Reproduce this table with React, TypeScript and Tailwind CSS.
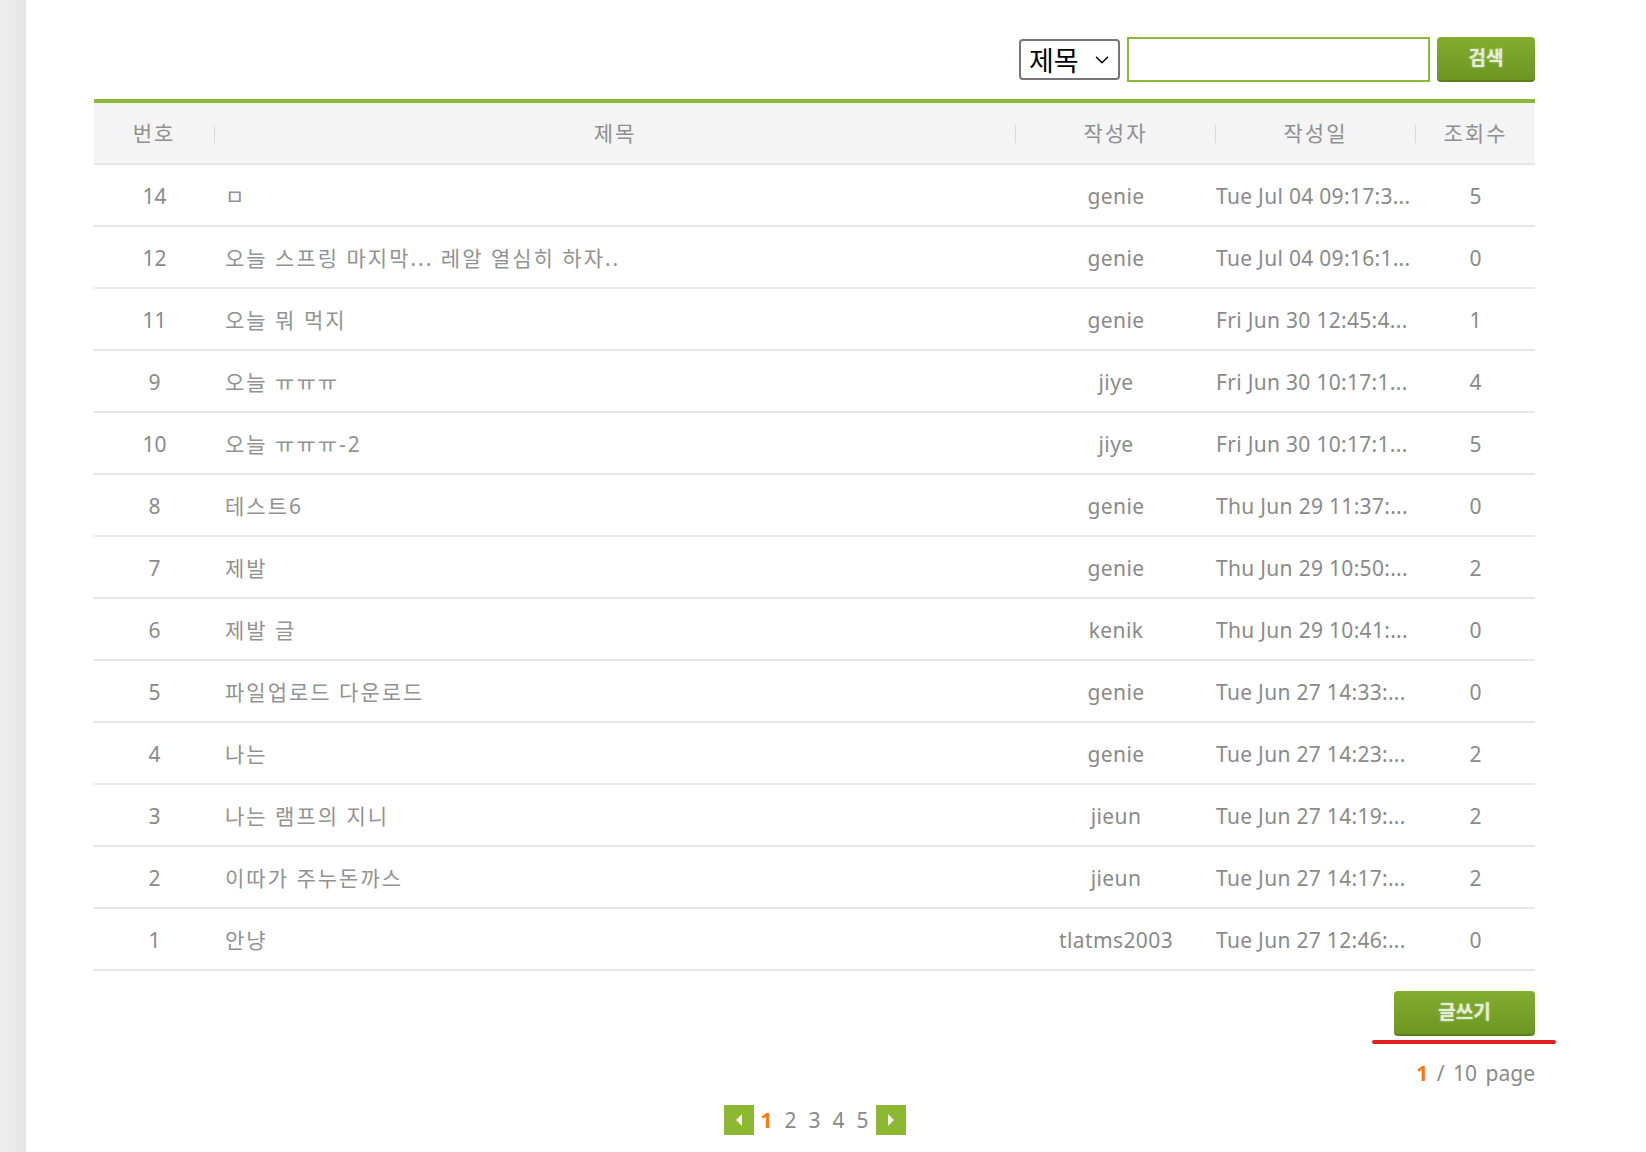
import { ChevronDown } from "lucide-react";

const posts = [
  { no: 14, title: "ㅁ", writer: "genie", date: "Tue Jul 04 09:17:3...", hit: 5 },
  { no: 12, title: "오늘 스프링 마지막... 레알 열심히 하자..", writer: "genie", date: "Tue Jul 04 09:16:1...", hit: 0 },
  { no: 11, title: "오늘 뭐 먹지", writer: "genie", date: "Fri Jun 30 12:45:4...", hit: 1 },
  { no: 9, title: "오늘 ㅠㅠㅠ", writer: "jiye", date: "Fri Jun 30 10:17:1...", hit: 4 },
  { no: 10, title: "오늘 ㅠㅠㅠ-2", writer: "jiye", date: "Fri Jun 30 10:17:1...", hit: 5 },
  { no: 8, title: "테스트6", writer: "genie", date: "Thu Jun 29 11:37:...", hit: 0 },
  { no: 7, title: "제발", writer: "genie", date: "Thu Jun 29 10:50:...", hit: 2 },
  { no: 6, title: "제발 글", writer: "kenik", date: "Thu Jun 29 10:41:...", hit: 0 },
  { no: 5, title: "파일업로드 다운로드", writer: "genie", date: "Tue Jun 27 14:33:...", hit: 0 },
  { no: 4, title: "나는", writer: "genie", date: "Tue Jun 27 14:23:...", hit: 2 },
  { no: 3, title: "나는 램프의 지니", writer: "jieun", date: "Tue Jun 27 14:19:...", hit: 2 },
  { no: 2, title: "이따가 주누돈까스", writer: "jieun", date: "Tue Jun 27 14:17:...", hit: 2 },
  { no: 1, title: "안냥", writer: "tlatms2003", date: "Tue Jun 27 12:46:...", hit: 0 },
];

const font = "font-['Noto_Sans','Noto_Sans_CJK_KR',sans-serif]";

function Sep() {
  return <div className="h-[18px] w-px self-center bg-[#d9d9d9]" />;
}

function GreenButton({ label, width }: { label: string; width: string }) {
  return (
    <button
      className={`h-[45px] ${width} rounded-[4px] border-b-2 border-[#5a7f1a] bg-gradient-to-b from-[#82ad2e] to-[#6c9722] text-[19px] font-bold text-[#e6eedb] [text-shadow:0_0_2px_rgba(255,255,255,0.6)]`}
    >
      {label}
    </button>
  );
}

export default function App() {
  return (
    <div className={`flex min-h-[1152px] bg-white ${font}`}>
      <div className="w-[26px] shrink-0 bg-gradient-to-r from-[#eeeeee] to-[#e6e6e6]" />
      <div className="ml-[68px] w-[1441px] pt-[37px]">
        {/* search */}
        <div className="flex h-[45px] items-center justify-end gap-[7px]">
          <div className="flex h-[41px] w-[101px] items-center justify-between rounded-[4px] border-2 border-[#767676] bg-white pl-[8px] pr-[5px] text-black">
            <span className="font-['Noto_Sans_CJK_KR',sans-serif] text-[27px] leading-none">제목</span>
            <ChevronDown size={22} strokeWidth={1.6} />
          </div>
          <div className="h-[45px] w-[303px] border-2 border-[#8cb832] bg-white" />
          <GreenButton label="검색" width="w-[98px]" />
        </div>

        {/* table */}
        <div className="mt-[17px] border-t-4 border-[#8cb832]">
          <div className="grid h-[62px] grid-cols-[120px_1px_800px_1px_199px_1px_199px_1px_119px] border-b-2 border-[#e6e6e6] bg-[#f4f4f4] pt-[2px] text-[21px] tracking-[2px] text-[#8f8f8f]">
            <div className="flex items-center justify-center">번호</div>
            <Sep />
            <div className="flex items-center justify-center">제목</div>
            <Sep />
            <div className="flex items-center justify-center">작성자</div>
            <Sep />
            <div className="flex items-center justify-center">작성일</div>
            <Sep />
            <div className="flex items-center justify-center">조회수</div>
          </div>
          {posts.map((p) => (
            <div
              key={p.no}
              className="grid h-[62px] grid-cols-[121px_801px_200px_200px_119px] border-b-2 border-[#e8e8e8] pt-[3px] text-[21px] text-[#8a8a8a]"
            >
              <div className="flex items-center justify-center">{p.no}</div>
              <div className="flex items-center pl-[10px] tracking-[2px] text-[#929292]">{p.title}</div>
              <div className="flex items-center justify-center tracking-[0.4px]">{p.writer}</div>
              <div className="flex items-center whitespace-nowrap tracking-[0.3px]">{p.date}</div>
              <div className="flex items-center justify-center">{p.hit}</div>
            </div>
          ))}
        </div>

        {/* write button */}
        <div className="mt-[20px] flex justify-end">
          <GreenButton label="글쓰기" width="w-[141px]" />
        </div>
        <div className="mr-[-21px] mt-[4px] flex justify-end">
          <div className="h-[4px] w-[184px] rounded-full bg-[#e41e1e]" />
        </div>
        <div className="mt-[14px] text-right text-[21px] text-[#8a8a8a] [word-spacing:3px]">
          <span className="font-bold text-[#ff7a00]">1</span> / 10 page
        </div>

        {/* pagination */}
        <div className="mt-[15px] flex items-center justify-center text-[21px] text-[#8a8a8a]">
          <div className="mr-[5px] flex h-[30px] w-[30px] items-center justify-center bg-[#8cb833]">
            <svg width="10" height="14" viewBox="0 0 10 14">
              <path d="M8 1 L2 7 L8 13 Z" fill="#f4f8ea" />
            </svg>
          </div>
          <div className="flex items-center gap-[8px]">
            <span className="w-[16px] text-center font-bold text-[#ff7a00]">1</span>
            <span className="w-[16px] text-center">2</span>
            <span className="w-[16px] text-center">3</span>
            <span className="w-[16px] text-center">4</span>
            <span className="w-[16px] text-center">5</span>
          </div>
          <div className="ml-[5px] flex h-[30px] w-[30px] items-center justify-center bg-[#8cb833]">
            <svg width="10" height="14" viewBox="0 0 10 14">
              <path d="M2 1 L8 7 L2 13 Z" fill="#f4f8ea" />
            </svg>
          </div>
        </div>
      </div>
    </div>
  );
}
